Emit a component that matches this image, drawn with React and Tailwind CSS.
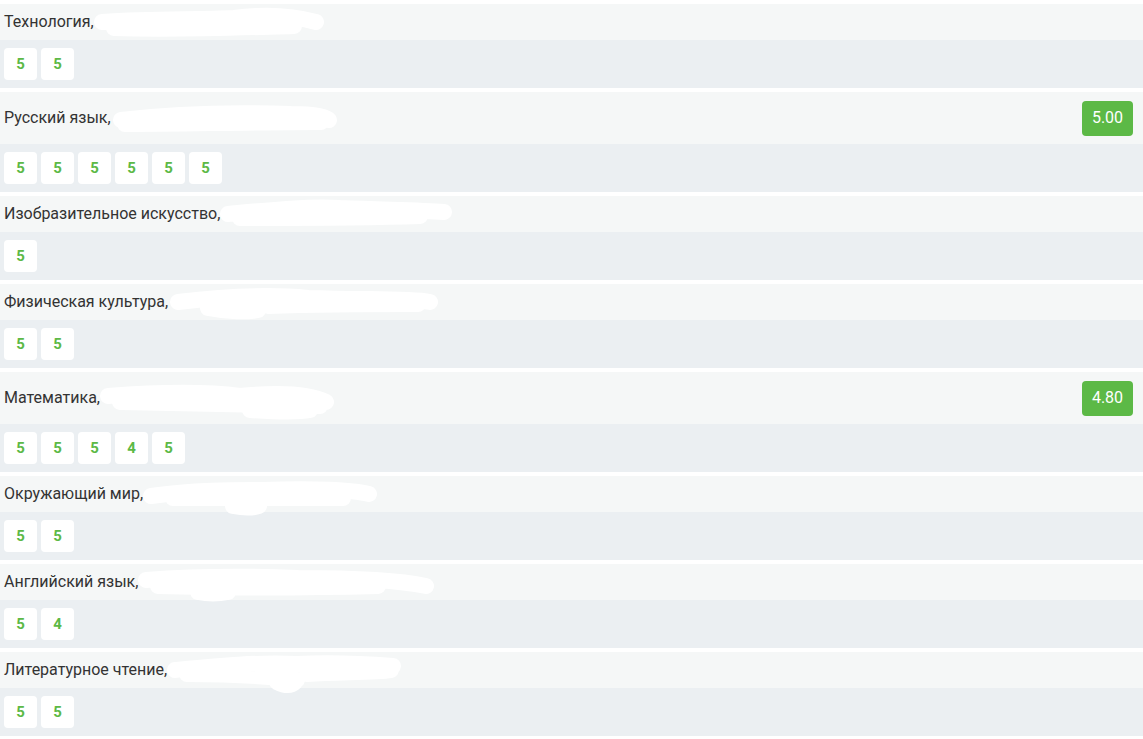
const subjects = [
  { name: 'Технология', grades: [5, 5], scribble: { w: 230, d: 'M8 16 C60 12 100 14 140 12 C170 8 200 10 222 16 M20 22 C80 24 130 22 200 20' } },
  { name: 'Русский язык', grades: [5, 5, 5, 5, 5, 5], avg: '5.00', scribble: { w: 226, d: 'M10 18 C60 12 120 10 180 12 C200 12 215 14 218 18 M14 22 C70 22 140 20 210 20' } },
  { name: 'Изобразительное искусство', grades: [5], scribble: { w: 232, d: 'M8 16 C50 12 90 8 120 10 C170 12 200 12 224 14 M20 20 C80 20 140 20 200 18' } },
  { name: 'Физическая культура', grades: [5, 5], scribble: { w: 270, d: 'M10 16 C60 10 100 8 140 12 C200 14 240 12 262 16 M40 22 C60 26 80 26 90 24 M100 20 C160 18 220 18 250 18' } },
  { name: 'Математика', grades: [5, 5, 5, 4, 5], avg: '4.80', scribble: { w: 234, d: 'M8 14 C60 10 110 10 140 14 C180 10 210 12 226 20 M20 20 C90 22 150 22 220 24 M150 28 C180 30 200 30 210 28' } },
  { name: 'Окружающий мир', grades: [5, 5], scribble: { w: 234, d: 'M8 18 C50 12 90 12 120 12 C170 10 210 12 226 16 M30 20 C80 20 140 20 200 20 M90 28 C100 30 110 30 116 28' } },
  { name: 'Английский язык', grades: [5, 4], scribble: { w: 296, d: 'M8 14 C60 10 110 10 160 12 C220 12 260 14 288 20 M20 20 C90 22 160 22 240 20 M60 26 C70 28 80 28 90 26' } },
  { name: 'Литературное чтение', grades: [5, 5], scribble: { w: 234, d: 'M8 16 C50 12 90 8 130 10 C170 8 200 10 226 12 M20 20 C70 20 100 22 130 26 M110 28 C118 32 124 32 128 28 M140 20 C180 18 210 18 224 16' } },
]

function Scribble({ w, d }) {
  return (
    <svg width={w} height={32} viewBox={`0 0 ${w} 32`} className="-my-2 overflow-visible shrink-0">
      <path d={d} fill="none" stroke="#ffffff" strokeWidth="16" strokeLinecap="round" strokeLinejoin="round" />
    </svg>
  )
}

export default function App() {
  return (
    <div className="bg-white pt-1 font-['Roboto',sans-serif] min-h-[739px]">
      {subjects.map(s => (
        <div key={s.name} className="mb-1">
          <div className={`flex items-center justify-between pl-1 pr-[10px] bg-[#f5f7f7] ${s.avg ? 'h-[52px]' : 'h-9'}`}>
            <div className="flex items-center">
              <span className="text-[16px] text-[#333333]">{s.name},</span>
              <Scribble {...s.scribble} />
            </div>
            {s.avg && (
              <span className="flex items-center justify-center w-[51px] h-[35px] rounded bg-[#5cb946] text-white text-[16px]">
                {s.avg}
              </span>
            )}
          </div>
          <div className="flex gap-1 px-1 py-2 bg-[#ebeff2]">
            {s.grades.map((g, i) => (
              <span
                key={i}
                className="flex items-center justify-center w-[33px] h-8 rounded bg-white text-[#5cb946] text-[15px] font-bold"
              >
                {g}
              </span>
            ))}
          </div>
        </div>
      ))}
    </div>
  )
}
